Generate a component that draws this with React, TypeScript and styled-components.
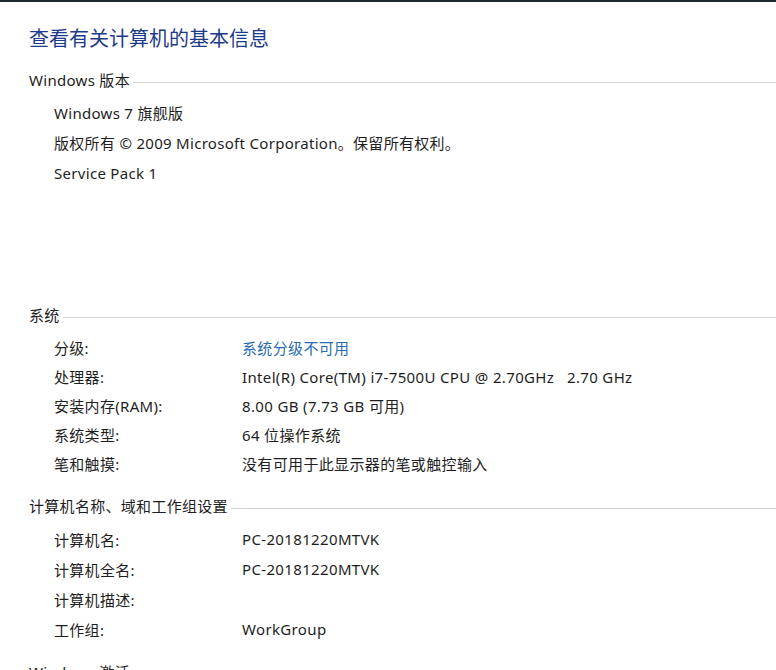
import { FC, Fragment } from 'react';
import styled, { createGlobalStyle } from 'styled-components';

const GlobalStyle = createGlobalStyle`
    html, body {
        margin: 0;
        padding: 0;
        background: #ffffff;
    }
    body {
        font-family: 'Noto Sans', 'Noto Sans CJK SC', sans-serif;
        color: #1e1e1e;
    }
`;

const Page = styled.div`
    width: 776px;
    height: 670px;
    overflow: hidden;
    box-sizing: border-box;
    border-top: 2px solid #1f2a30;
    padding: 23px 0 0 29px;
`;

const Title = styled.h1`
    margin: 0 0 16px 0;
    font-size: 20px;
    line-height: 28px;
    font-weight: normal;
    color: #1e3a8a;
`;

const Section = styled.section<{ $gap: number }>`
    margin-bottom: ${p => p.$gap}px;
`;

const Header = styled.div`
    display: flex;
    align-items: center;
    font-size: 15px;
    line-height: 22px;
    letter-spacing: 0.3px;
    margin-bottom: 7px;
    color: #1e1e1e;
    white-space: nowrap;
`;

const Rule = styled.div`
    flex: 1;
    height: 1px;
    background: #d3d3d3;
    margin: 4px 0 0 3px;
`;

const Lines = styled.div`
    padding-left: 25px;
    font-size: 15px;
    letter-spacing: 0.3px;
`;

const Line = styled.div`
    line-height: 30px;
`;

const Grid = styled.div<{ $row: number }>`
    display: grid;
    grid-template-columns: 188px 1fr;
    grid-auto-rows: ${p => p.$row}px;
    align-items: center;
    padding-left: 25px;
    font-size: 15px;
    letter-spacing: 0.3px;
`;

const Label = styled.div`
    white-space: nowrap;
`;

const Value = styled.div<{ $link?: boolean }>`
    white-space: pre;
    letter-spacing: 0.35px;
    color: ${p => (p.$link ? '#2a6cb0' : '#1e1e1e')};
`;

type Row = [string, string, boolean?];

const systemRows: Row[] = [
    ['分级:', '系统分级不可用', true],
    ['处理器:', 'Intel(R) Core(TM) i7-7500U CPU @ 2.70GHz   2.70 GHz'],
    ['安装内存(RAM):', '8.00 GB (7.73 GB 可用)'],
    ['系统类型:', '64 位操作系统'],
    ['笔和触摸:', '没有可用于此显示器的笔或触控输入'],
];

const computerRows: Row[] = [
    ['计算机名:', 'PC-20181220MTVK'],
    ['计算机全名:', 'PC-20181220MTVK'],
    ['计算机描述:', ''],
    ['工作组:', 'WorkGroup'],
];

const InfoGrid: FC<{ rows: Row[]; rowHeight: number }> = ({ rows, rowHeight }) => (
    <Grid $row={rowHeight}>
        {rows.map(([label, value, link]) => (
            <Fragment key={label}>
                <Label>{label}</Label>
                <Value $link={link}>{value}</Value>
            </Fragment>
        ))}
    </Grid>
);

const App: FC = () => {
    return (
        <>
            <GlobalStyle />
            <Page>
                <Title>查看有关计算机的基本信息</Title>

                <Section $gap={116}>
                    <Header>Windows 版本<Rule /></Header>
                    <Lines>
                        <Line>Windows 7 旗舰版</Line>
                        <Line>版权所有 © 2009 Microsoft Corporation。保留所有权利。</Line>
                        <Line>Service Pack 1</Line>
                    </Lines>
                </Section>

                <Section $gap={17}>
                    <Header>系统<Rule /></Header>
                    <InfoGrid rows={systemRows} rowHeight={29} />
                </Section>

                <Section $gap={17}>
                    <Header>计算机名称、域和工作组设置<Rule /></Header>
                    <InfoGrid rows={computerRows} rowHeight={30} />
                </Section>

                <Section $gap={0}>
                    <Header>Windows 激活<Rule /></Header>
                </Section>
            </Page>
        </>
    );
};

export default App;
